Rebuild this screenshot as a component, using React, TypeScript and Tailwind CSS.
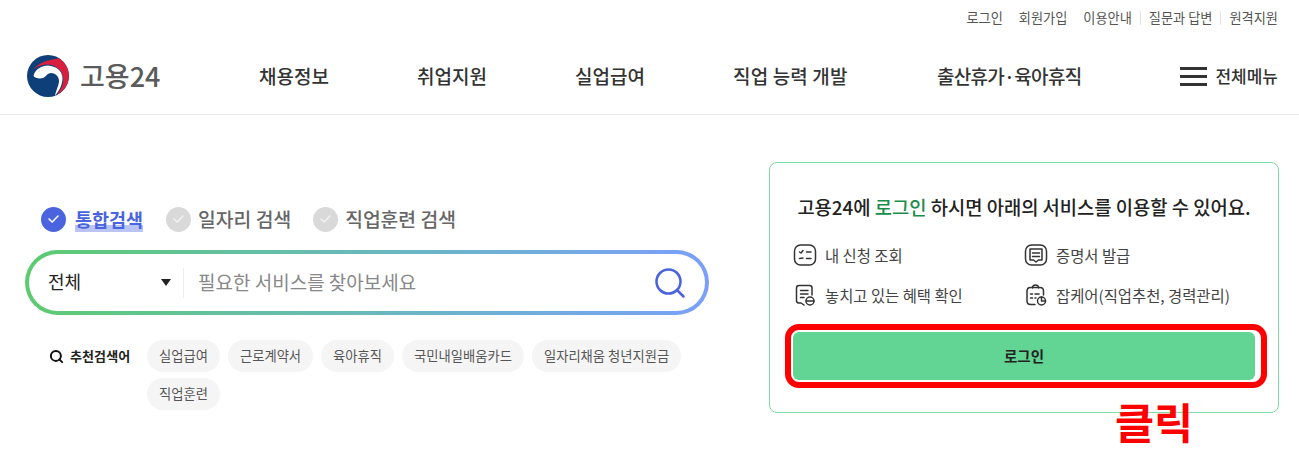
import { Search } from "lucide-react";

const utilLinks = [
  { label: "로그인", className: "mr-4" },
  { label: "회원가입", className: "mr-4" },
  { label: "이용안내", className: "mr-2 pr-2 border-r border-[#e2e2e2]" },
  { label: "질문과 답변", className: "mr-2 pr-2 border-r border-[#e2e2e2]" },
  { label: "원격지원", className: "" },
];

const navItems = [
  { label: "채용정보", className: "w-[158px]" },
  { label: "취업지원", className: "w-[158px]" },
  { label: "실업급여", className: "w-[158px]" },
  { label: "직업 능력 개발", className: "w-[204px] tracking-[0.15px]" },
  { label: "출산휴가·육아휴직", className: "tracking-[-0.7px]" },
];

const keywords = ["실업급여", "근로계약서", "육아휴직", "국민내일배움카드", "일자리채움 청년지원금", "직업훈련"];

function Logo() {
  return (
    <svg width="42" height="42" viewBox="0 0 42 42">
      <circle cx="21" cy="21" r="21" fill="#0f3f78" />
      <path d="M6 15.5 C10 8.5 19 5 32 3.2 A21 21 0 0 1 29 40.4 C35 34 37 28 36 22 C34.5 14 27 9 20 9.5 C13 10 8.5 12 6 15.5 Z" fill="#d81f3d" />
      <path d="M6.5 21 C8 14 15 10.5 21 10.5 C29 11 35.5 16 35.5 23 C35.5 30 32 36 28 41 C29 35 32 30 32 26 C32 21 28 18 24 18 C20 18 19 22 16 23 C12 24 8 23 6.5 21 Z" fill="#ffffff" />
    </svg>
  );
}

function Check({ on }: { on: boolean }) {
  return (
    <span className={`flex h-[25px] w-[25px] shrink-0 items-center justify-center rounded-full ${on ? "bg-[#4a64e0]" : "bg-[#d9d9d9]"}`}>
      <svg width="13" height="10" viewBox="0 0 13 10" fill="none" stroke={on ? "#ffffff" : "#f2f2f2"} strokeWidth="1.6" strokeLinecap="round" strokeLinejoin="round">
        <path d="M2 5 L5.2 8 L11 2" />
      </svg>
    </span>
  );
}

function ListIcon() {
  return (
    <svg width="24" height="24" viewBox="0 0 24 24" fill="none" stroke="#333333" strokeWidth="1.5" strokeLinecap="round" strokeLinejoin="round">
      <rect x="1.5" y="2" width="21" height="20" rx="6" />
      <path d="M6.5 9 L8 10 L10 7.5 M13.5 9 H18 M6.5 15.5 L10 15 M13.5 15.5 H18" />
    </svg>
  );
}

function CertIcon() {
  return (
    <svg width="24" height="24" viewBox="0 0 24 24" fill="none" stroke="#333333" strokeWidth="1.5" strokeLinecap="round" strokeLinejoin="round">
      <rect x="1.5" y="2" width="21" height="20" rx="6" />
      <path d="M6 17 V6 H18 V17 H14.5 L12 19 L9.5 17 Z M8.5 10 H15.5 M8.5 13.5 H15.5" />
    </svg>
  );
}

function BenefitIcon() {
  return (
    <svg width="24" height="24" viewBox="0 0 24 24" fill="none" stroke="#333333" strokeWidth="1.5" strokeLinecap="round" strokeLinejoin="round">
      <path d="M11 22 L8 20 H6 C4.5 20 3.5 19 3.5 17.5 V5 C3.5 3.5 4.5 2.5 6 2.5 H16.5 C18 2.5 19 3.5 19 5 V12" />
      <path d="M7.5 7.5 H15 M7.5 11 H15 M7.5 14.5 H11" />
      <circle cx="17" cy="18" r="4" />
      <path d="M13 18 H21" />
    </svg>
  );
}

function JobCareIcon() {
  return (
    <svg width="24" height="24" viewBox="0 0 24 24" fill="none" stroke="#333333" strokeWidth="1.5" strokeLinecap="round" strokeLinejoin="round">
      <path d="M11 21.5 H6.5 C4.5 21.5 3 20 3 18 V8 C3 6 4.5 4.5 6.5 4.5 H16 C18 4.5 19.5 6 19.5 8 V12" />
      <path d="M8.5 5 C8.5 3 10 2 11.5 2 C13 2 14.5 3 14.5 5" />
      <path d="M6.5 11 H8.5 M11 11 H15 M6.5 15 H8.5 M11 15 H12" />
      <circle cx="17.5" cy="18" r="4" />
      <path d="M17.5 14 V18 H21.5" />
    </svg>
  );
}

const services = [
  { label: "내 신청 조회", icon: <ListIcon /> },
  { label: "증명서 발급", icon: <CertIcon /> },
  { label: "놓치고 있는 혜택 확인", icon: <BenefitIcon /> },
  { label: "잡케어(직업추천, 경력관리)", icon: <JobCareIcon /> },
];

export default function App() {
  return (
    <div className="h-[470px] w-[1299px] overflow-hidden bg-white font-['Noto_Sans_CJK_KR','Noto_Sans',sans-serif] text-[#333333]">
      {/* header */}
      <header className="h-[115px] border-b border-[#ececec]">
        <div className="flex h-[36px] items-center justify-end pr-[21px] text-[13.2px] leading-[14px] text-[#555555]">
          {utilLinks.map((link) => (
            <span key={link.label} className={link.className}>
              {link.label}
            </span>
          ))}
        </div>
        <div className="flex items-center pl-[27px] pr-[21px] pt-[19px]">
          <Logo />
          <span className="ml-[11px] w-[179px] text-[27px] font-medium leading-[32px] text-[#5b5b5b]">고용24</span>
          <nav className="flex flex-1 items-center text-[19px] font-medium leading-[24px] text-[#333333]">
            {navItems.map((item) => (
              <span key={item.label} className={item.className}>
                {item.label}
              </span>
            ))}
          </nav>
          <div className="flex items-center gap-[8px]">
            <span className="flex w-[27px] flex-col gap-[5px]">
              <span className="h-[3px] bg-[#333333]" />
              <span className="h-[3px] bg-[#333333]" />
              <span className="h-[3px] bg-[#333333]" />
            </span>
            <span className="text-[17px] font-medium leading-[22px] text-[#333333]">전체메뉴</span>
          </div>
        </div>
      </header>

      {/* body */}
      <main className="relative flex items-start pl-[25px] pt-[47px]">
        <section className="w-[684px] pt-[44px]">
          <div className="flex items-center pl-[16px] text-[19.3px] font-medium leading-[26px] text-[#666666]">
            <Check on />
            <span className="ml-[9px] mr-[23px] bg-[linear-gradient(transparent_75%,#b9c4f4_75%)] text-[18.5px] font-bold text-[#4a64e0]">통합검색</span>
            <Check on={false} />
            <span className="ml-[7px] mr-[22px]">일자리 검색</span>
            <Check on={false} />
            <span className="ml-[7px]">직업훈련 검색</span>
          </div>
          <div className="mt-[18px] h-[65px] rounded-full bg-gradient-to-r from-[#5ccb6e] to-[#7a9ffb] p-[4px]">
            <div className="flex h-full items-center rounded-full bg-white pl-[19px] pr-[17px]">
              <span className="-mt-[3px] w-[113px] text-[18px] leading-[26px] text-[#222222]">전체</span>
              <span className="h-0 w-0 border-x-[5px] border-t-[7px] border-x-transparent border-t-[#222222]" />
              <span className="ml-[12px] mr-[14px] h-[30px] w-px bg-[#eeeeee]" />
              <span className="-mt-[1px] flex-1 text-[19px] leading-[26px] text-[#888888]">필요한 서비스를 찾아보세요</span>
              <Search size={36} strokeWidth={1.7} color="#4a64e0" />
            </div>
          </div>
          <div className="mt-[25px] flex items-start">
            <div className="flex h-[32px] w-[122px] shrink-0 items-center pl-[24px]">
              <Search size={15} strokeWidth={3.2} color="#111111" />
              <span className="ml-[6px] text-[13px] font-bold leading-[16px] tracking-[0.1px] text-[#222222]">추천검색어</span>
            </div>
            <div className="flex w-[560px] flex-wrap gap-x-[8px] gap-y-[6px]">
              {keywords.map((word) => (
                <span key={word} className="flex h-[32px] items-center rounded-full bg-[#f5f5f5] px-[12px] text-[13.3px] leading-[16px] text-[#555555]">
                  {word}
                </span>
              ))}
            </div>
          </div>
        </section>

        <aside className="ml-[60px] h-[251px] w-[510px] rounded-[8px] border border-[#7fdca5] px-[15px] pt-[30px]">
          <p className="text-center text-[18.75px] font-medium leading-[28px] text-[#222222]">
            고용24에 <span className="text-[#1c8c4a]">로그인</span> 하시면 아래의 서비스를 이용할 수 있어요.
          </p>
          <div className="mt-[22px] grid grid-cols-[231px_1fr] gap-y-[16px] pl-[8px]">
            {services.map((item) => (
              <div key={item.label} className="flex h-[24px] items-center gap-[8px] text-[15.4px] leading-[20px] text-[#444444]">
                {item.icon}
                <span className="-mt-[1px]">{item.label}</span>
              </div>
            ))}
          </div>
          <div className="-mr-[4px] mt-[17px] rounded-[14px] border-[6px] border-[#ff0000] pb-[2px] pl-[2px] pr-[6px] pt-[2px]">
            <button className="block h-[48px] w-full rounded-[6px] bg-[#62d493] text-[14.5px] font-bold text-[#222222]">로그인</button>
          </div>
        </aside>

        <span className="absolute left-[1115px] top-[276px] text-[42.5px] font-bold leading-[60px] text-[#ff0000]">클릭</span>
      </main>
    </div>
  );
}
